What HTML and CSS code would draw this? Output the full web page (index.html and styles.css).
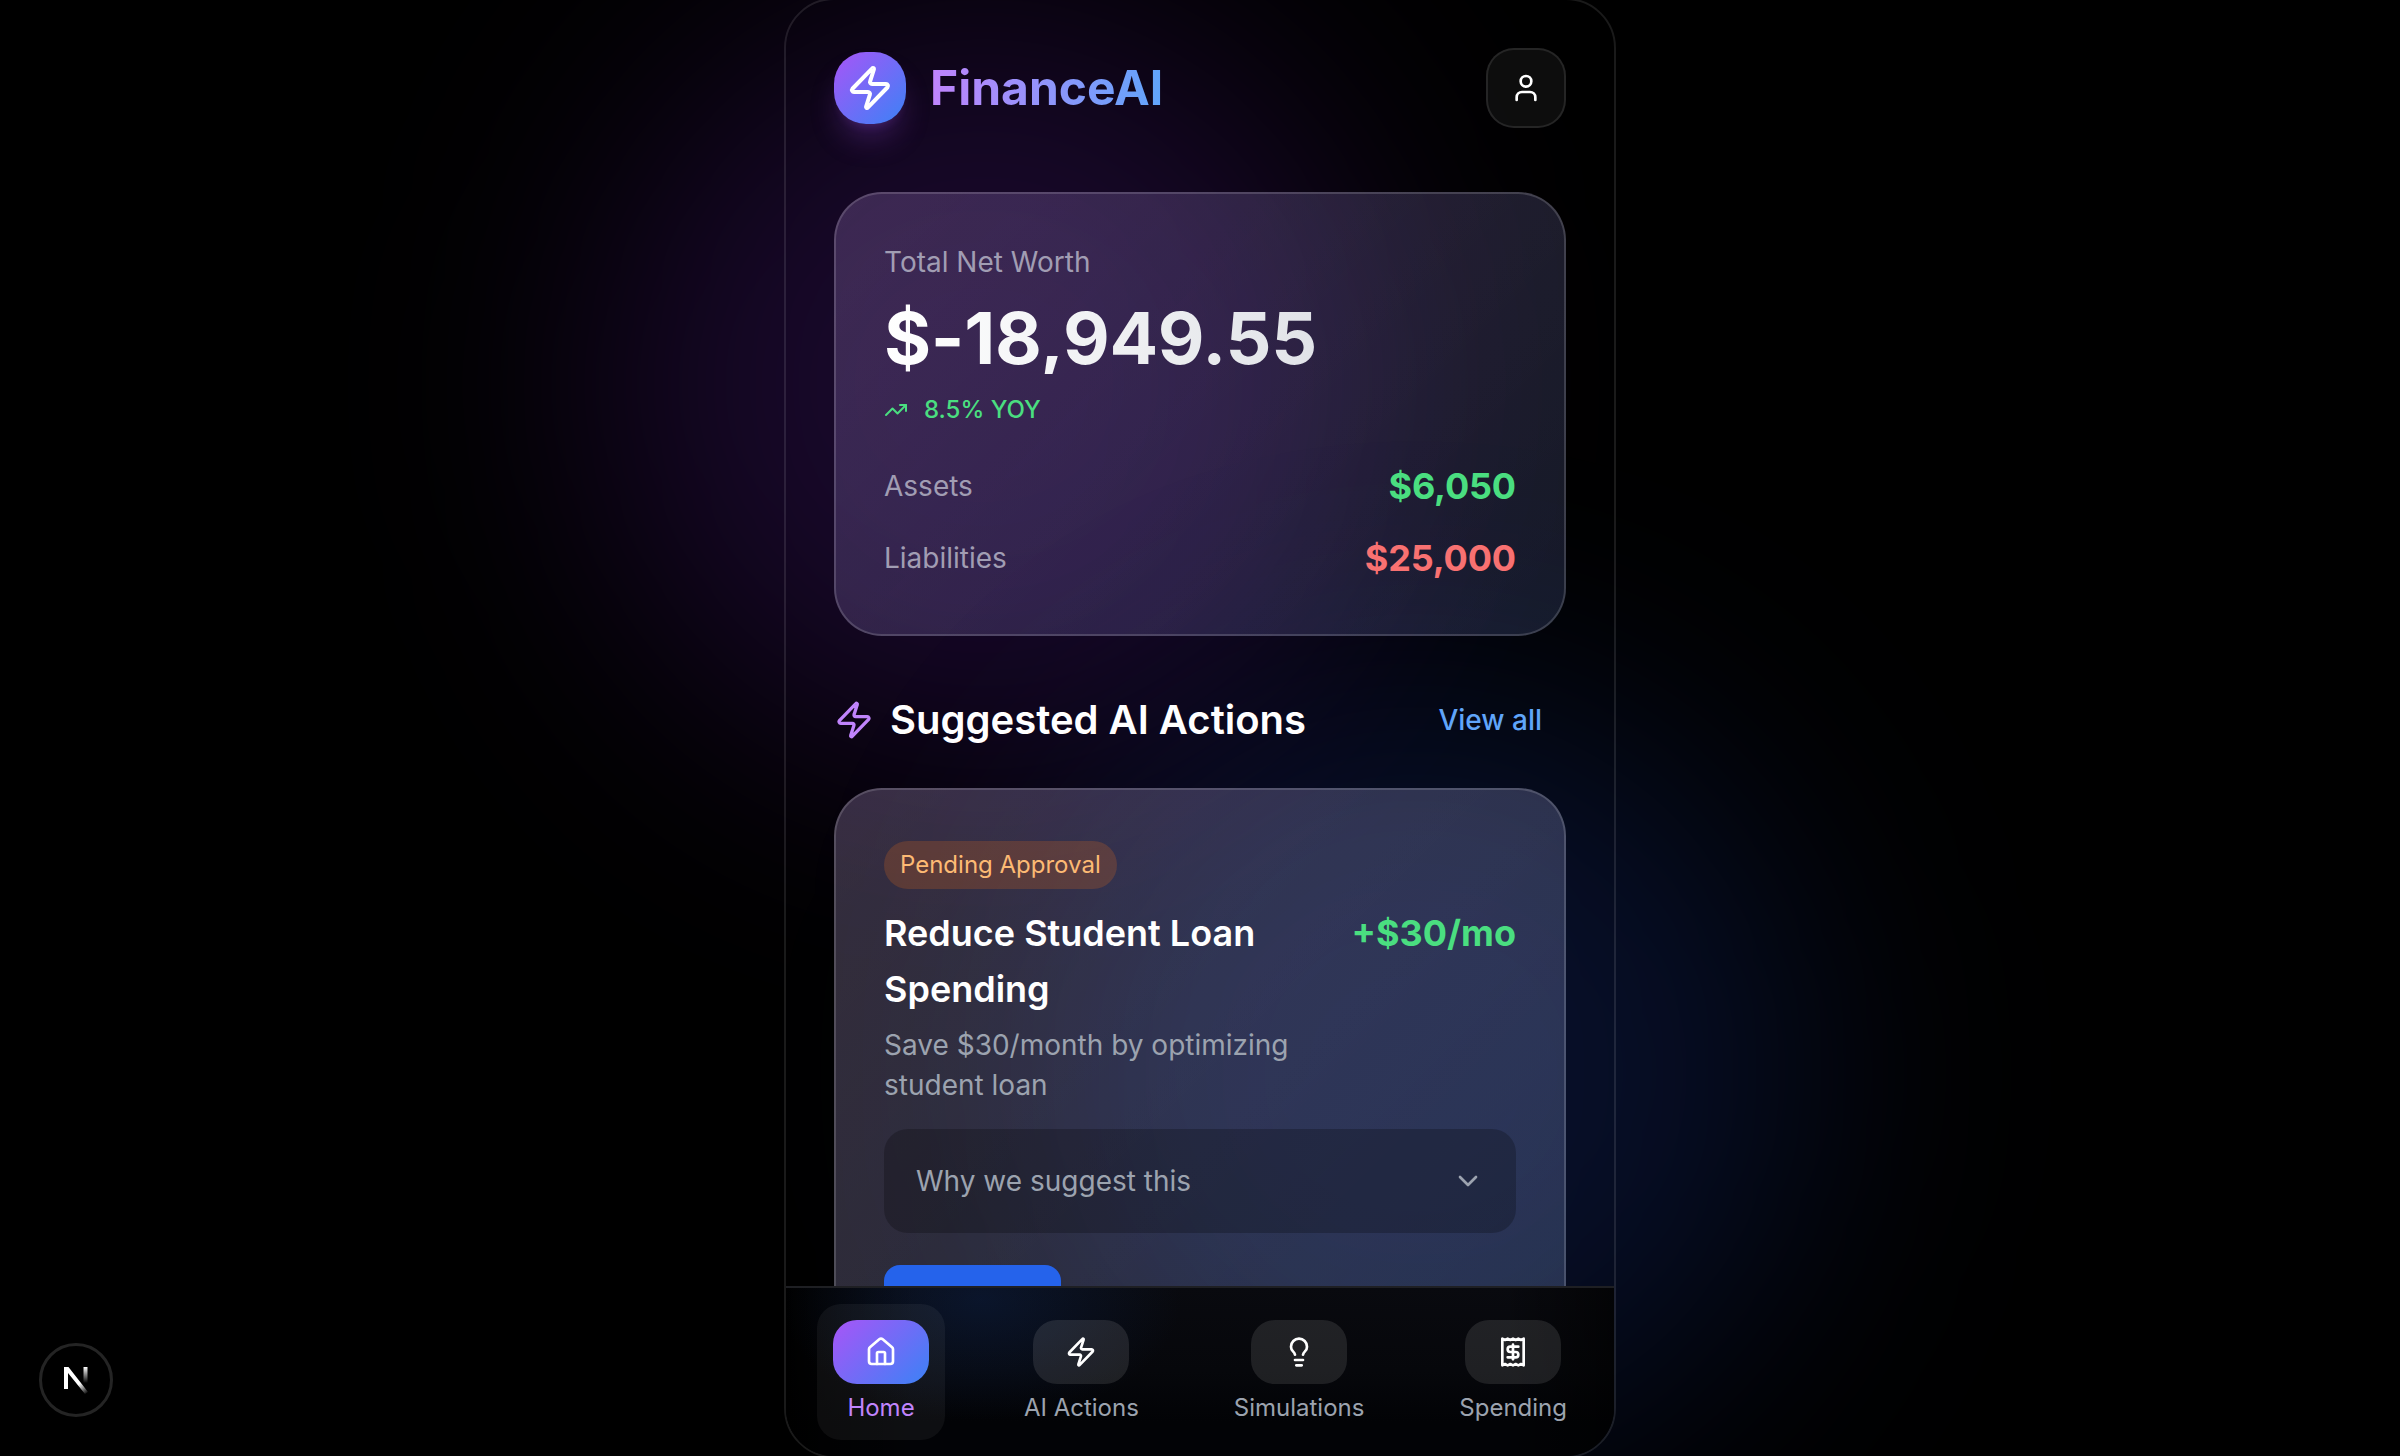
FILE: index.html
```html
<!DOCTYPE html>
<html lang="en">
<head>
<meta charset="utf-8">
<title>FinanceAI</title>
<link rel="stylesheet" href="styles.css">
</head>
<body>
<svg class="sprite" aria-hidden="true">
  <symbol id="zap" viewBox="0 0 24 24"><path d="M4 14a1 1 0 0 1-.78-1.63l9.9-10.2a.5.5 0 0 1 .86.46l-1.92 6.02A1 1 0 0 0 13 10h7a1 1 0 0 1 .78 1.63l-9.9 10.2a.5.5 0 0 1-.86-.46l1.92-6.02A1 1 0 0 0 11 14z"/></symbol>
</svg>
<div class="glow glow-purple"></div>
<div class="glow glow-blue"></div>

<div class="phone">
  <main class="content">
    <header class="header">
      <div class="brand">
        <span class="logo"><svg class="icon icon-48"><use href="#zap"/></svg></span>
        <h1 class="brand-name">FinanceAI</h1>
      </div>
      <button class="profile" aria-label="Profile">
        <svg class="icon icon-32" viewBox="0 0 24 24"><path d="M19 21v-2a4 4 0 0 0-4-4H9a4 4 0 0 0-4 4v2"/><circle cx="12" cy="7" r="4"/></svg>
      </button>
    </header>

    <section class="card worth">
      <p class="muted">Total Net Worth</p>
      <p class="total">$-18,949.55</p>
      <p class="trend">
        <svg class="icon icon-24" viewBox="0 0 24 24"><path d="M22 7l-8.5 8.5-5-5L2 17"/><path d="M16 7h6v6"/></svg>
        <span>8.5% YOY</span>
      </p>
      <div class="rows">
        <div class="row"><span class="muted">Assets</span><span class="amount green">$6,050</span></div>
        <div class="row"><span class="muted">Liabilities</span><span class="amount red">$25,000</span></div>
      </div>
    </section>

    <div class="section-head">
      <h2 class="section-title"><svg class="icon icon-40"><use href="#zap"/></svg><span>Suggested AI Actions</span></h2>
      <button class="view-all">View all</button>
    </div>

    <section class="card action">
      <span class="badge">Pending Approval</span>
      <div class="action-main">
        <div class="action-text">
          <h3 class="action-title">Reduce Student Loan Spending</h3>
          <p class="muted">Save $30/month by optimizing student loan</p>
        </div>
        <span class="amount green">+$30/mo</span>
      </div>
      <button class="why">
        <span>Why we suggest this</span>
        <svg class="icon icon-32" viewBox="0 0 24 24"><path d="M6 9l6 6 6-6"/></svg>
      </button>
      <button class="approve" aria-label="Approve"></button>
    </section>
  </main>

  <nav class="nav">
    <a class="tab active">
      <span class="tab-icon"><svg class="icon icon-32" viewBox="0 0 24 24"><path d="M15 21v-8a1 1 0 0 0-1-1h-4a1 1 0 0 0-1 1v8"/><path d="M3 10a2 2 0 0 1 .709-1.528l7-5.999a2 2 0 0 1 2.582 0l7 5.999A2 2 0 0 1 21 10v9a2 2 0 0 1-2 2H5a2 2 0 0 1-2-2z"/></svg></span>
      <span>Home</span>
    </a>
    <a class="tab">
      <span class="tab-icon"><svg class="icon icon-32"><use href="#zap"/></svg></span>
      <span>AI Actions</span>
    </a>
    <a class="tab">
      <span class="tab-icon"><svg class="icon icon-32" viewBox="0 0 24 24"><path d="M15 14c.2-1 .7-1.7 1.5-2.5 1-.9 1.5-2.2 1.5-3.5A6 6 0 0 0 6 8c0 1 .2 2.2 1.5 3.5.7.7 1.3 1.5 1.5 2.5"/><path d="M9 18h6"/><path d="M10 22h4"/></svg></span>
      <span>Simulations</span>
    </a>
    <a class="tab">
      <span class="tab-icon"><svg class="icon icon-32" viewBox="0 0 24 24"><path d="M4 2v20l2-1 2 1 2-1 2 1 2-1 2 1 2-1 2 1V2l-2 1-2-1-2 1-2-1-2 1-2-1-2 1Z"/><path d="M16 8h-6a2 2 0 1 0 0 4h4a2 2 0 1 1 0 4H8"/><path d="M12 17.5v-11"/></svg></span>
      <span>Spending</span>
    </a>
  </nav>
</div>

<div class="dev-badge">
  <svg width="28" height="30" viewBox="0 0 28 30" fill="none">
    <defs>
      <linearGradient id="diag" gradientUnits="userSpaceOnUse" x1="17" y1="19" x2="25" y2="29"><stop stop-color="#fff"/><stop offset="1" stop-color="#fff" stop-opacity="0"/></linearGradient>
      <linearGradient id="stem" gradientUnits="userSpaceOnUse" x1="0" y1="2" x2="0" y2="18"><stop stop-color="#fff"/><stop offset="1" stop-color="#fff" stop-opacity="0"/></linearGradient>
    </defs>
    <path d="M2 2h4.500L26 27l-3 2L6 8v16H2z" fill="url(#diag)"/>
    <path d="M21.500 2h4v17h-4z" fill="url(#stem)"/>
  </svg>
</div>
</body>
</html>
```
FILE: styles.css
```css
* { box-sizing: border-box; margin: 0; padding: 0; }

body {
  position: relative;
  display: flow-root;
  width: 2400px;
  height: 1456px;
  overflow: hidden;
  background: #000;
  color: #fff;
  font-family: Inter, "Liberation Sans", sans-serif;
  font-size: 28px;
  line-height: 40px;
}

button { border: 0; background: none; color: inherit; font: inherit; }

.sprite { position: absolute; width: 0; height: 0; }

.icon {
  display: block;
  flex: none;
  fill: none;
  stroke: currentColor;
  stroke-width: 2;
  stroke-linecap: round;
  stroke-linejoin: round;
}
.icon-24 { width: 24px; height: 24px; }
.icon-32 { width: 32px; height: 32px; }
.icon-40 { width: 40px; height: 40px; }
.icon-48 { width: 48px; height: 48px; }

/* Ambient light behind the phone */
.glow {
  position: absolute;
  width: 768px;
  height: 768px;
  border-radius: 50%;
  filter: blur(128px);
}
.glow-purple { top: 0; left: 600px; background: rgba(145, 50, 247, .17); }
.glow-blue { bottom: 0; right: 600px; background: rgba(40, 90, 246, .165); }

.phone {
  position: relative;
  display: flex;
  flex-direction: column;
  width: 832px;
  height: 1460px;
  margin: -2px auto;
  overflow: hidden;
  border: 2px solid rgba(255, 255, 255, .1);
  border-radius: 50px;
}

.content { padding: 48px 48px 0; }

.header {
  display: flex;
  align-items: center;
  justify-content: space-between;
  height: 80px;
  margin-bottom: 64px;
}
.brand { display: flex; align-items: center; gap: 24px; }
.logo {
  display: grid;
  place-items: center;
  width: 72px;
  height: 72px;
  border-radius: 32px;
  background: linear-gradient(135deg, #a855f7, #3b82f6);
  box-shadow: 0 20px 30px -6px rgba(168, 85, 247, .25), 0 8px 12px -8px rgba(168, 85, 247, .25);
}
.brand-name {
  background: linear-gradient(90deg, #c084fc, #60a5fa);
  background-clip: text;
  color: transparent;
  font-size: 48px;
  font-weight: 700;
  line-height: 64px;
}
.profile {
  display: grid;
  place-items: center;
  width: 80px;
  height: 80px;
  border: 2px solid rgba(255, 255, 255, .1);
  border-radius: 28px;
  background: rgba(255, 255, 255, .05);
}

.card {
  padding: 48px;
  border: 2px solid rgba(255, 255, 255, .16);
  border-radius: 48px;
}
.muted { color: #9ca3af; }
.worth .muted { color: #a19db3; }

.worth {
  height: 444px;
  background:
    linear-gradient(135deg, rgba(255, 255, 255, .1), rgba(255, 255, 255, .05)) border-box,
    linear-gradient(135deg, rgba(168, 85, 247, .12), rgba(75, 115, 246, .11)) border-box;
}
.total {
  width: fit-content;
  margin-top: 20px;
  background: linear-gradient(90deg, #fff, #e1e3e8);
  background-clip: text;
  color: transparent;
  font-size: 72px;
  font-weight: 700;
  letter-spacing: -.28px;
  line-height: 72px;
}
.trend {
  display: flex;
  align-items: center;
  gap: 16px;
  margin-top: 20px;
  color: #4ade80;
  font-size: 24px;
  font-weight: 500;
  line-height: 32px;
}
.rows { display: grid; gap: 16px; margin-top: 32px; }
.row { display: flex; align-items: center; justify-content: space-between; }
.amount { font-size: 36px; font-weight: 700; letter-spacing: -.15px; line-height: 56px; }
.green { color: #4ade80; }
.red { color: #f87171; }

.section-head {
  display: flex;
  align-items: center;
  justify-content: space-between;
  height: 152px;
  padding-top: 15px;
}
.section-title {
  display: flex;
  align-items: center;
  gap: 16px;
  font-size: 40px;
  font-weight: 600;
  line-height: 56px;
}
.section-title .icon { color: #c084fc; }
.view-all { padding: 0 24px; color: #60a5fa; font-weight: 500; }

.action {
  height: 607px;
  padding-top: 51px;
  background:
    linear-gradient(135deg, rgba(255, 255, 255, .15), rgba(255, 255, 255, .1)) border-box,
    linear-gradient(135deg, rgba(168, 85, 247, .1), rgba(59, 125, 246, .13)) border-box;
}
.badge {
  display: block;
  width: fit-content;
  padding: 8px 16px;
  border-radius: 24px;
  background: rgba(249, 115, 22, .2);
  color: #fdba74;
  font-size: 24px;
  line-height: 32px;
}
.action-main {
  display: flex;
  justify-content: space-between;
  margin-top: 16px;
}
.action-text { display: grid; gap: 8px; width: 430px; }
.action-title { font-size: 36px; font-weight: 600; line-height: 56px; }
.action .amount { letter-spacing: 0; }
.why {
  display: flex;
  align-items: center;
  justify-content: space-between;
  width: 100%;
  height: 104px;
  margin-top: 24px;
  padding: 0 32px;
  border-radius: 24px;
  background: rgba(0, 0, 0, .23);
  color: #9ca3af;
}
.approve {
  display: block;
  width: 177px;
  height: 80px;
  margin-top: 32px;
  border-radius: 16px;
  background: #2563eb;
}

.nav {
  position: absolute;
  right: 0;
  bottom: 0;
  left: 0;
  display: flex;
  justify-content: space-between;
  height: 170px;
  padding: 16px 31px;
  border-top: 2px solid #1e1f23;
  background:
    radial-gradient(200px 120px at 195px 12px, rgba(14, 40, 90, .38), transparent) padding-box,
    linear-gradient(90deg, #000, transparent 130px calc(100% - 110px), rgba(0, 0, 0, .6)) padding-box,
    linear-gradient(#090a0f, #06070b 50%, #020306 80%) border-box;
}
.tab {
  display: flex;
  flex-direction: column;
  align-items: center;
  gap: 8px;
  height: 136px;
  padding: 16px;
  border-radius: 24px;
  color: #9ca3af;
  font-size: 24px;
  line-height: 32px;
}
.tab-icon {
  display: grid;
  place-items: center;
  width: 96px;
  height: 64px;
  border-radius: 24px;
  background: rgba(255, 255, 255, .1);
  color: #fff;
}
.tab.active { background: rgba(255, 255, 255, .05); color: #c084fc; }
.tab.active .tab-icon { background: linear-gradient(135deg, #a855f7, #3b82f6); }

/* Dev tools indicator pinned to the window corner */
.dev-badge {
  position: absolute;
  left: 39px;
  bottom: 39px;
  display: grid;
  place-items: center;
  width: 74px;
  height: 74px;
  border: 3px solid #242424;
  border-radius: 50%;
  background: #000;
}
```
